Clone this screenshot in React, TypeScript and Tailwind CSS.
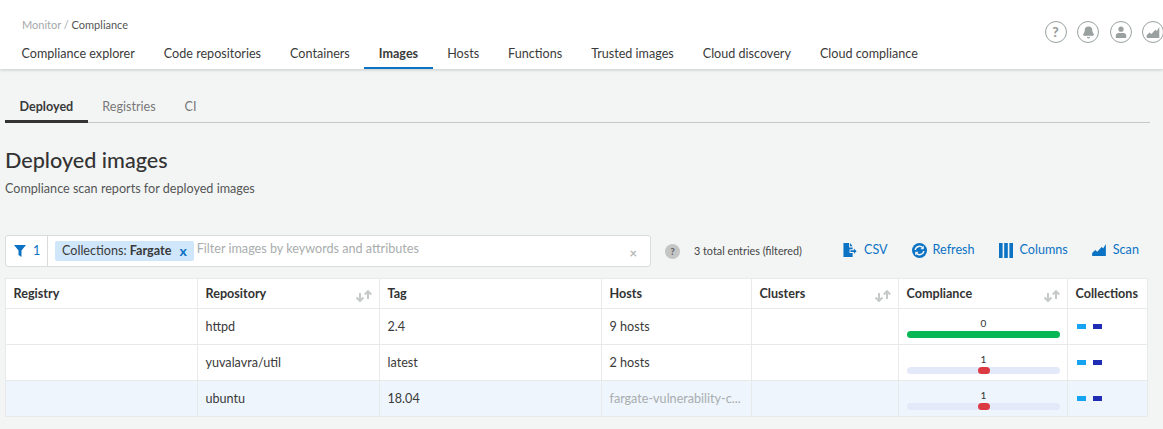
import { Bell } from "lucide-react";

const navTabs = [
  "Compliance explorer",
  "Code repositories",
  "Containers",
  "Images",
  "Hosts",
  "Functions",
  "Trusted images",
  "Cloud discovery",
  "Cloud compliance",
];

const gridCols = "grid grid-cols-[192px_182px_222px_150px_147px_169px_81px]";

const rows = [
  { repository: "httpd", tag: "2.4", hosts: "9 hosts", compliance: 0 },
  { repository: "yuvalavra/util", tag: "latest", hosts: "2 hosts", compliance: 1 },
  {
    repository: "ubuntu",
    tag: "18.04",
    hosts: "fargate-vulnerability-c...",
    muted: true,
    compliance: 1,
    selected: true,
  },
];

function ChartIcon({ className }: { className?: string }) {
  return (
    <svg viewBox="0 0 16 14" className={className} fill="currentColor">
      <path d="M0 14V10.5L3.5 7L6 9L11 3.5L13 5L16 0V14Z" />
    </svg>
  );
}

function SortArrows() {
  return (
    <svg viewBox="0 0 17 12" className="absolute right-[7px] top-[11px] h-[12px] w-[17px]" fill="none" strokeWidth="2">
      <path d="M5 3V11M1.5 7.5L5 11L8.5 7.5" stroke="#c6c9c9" />
      <path d="M13 9V1.5M9.8 4.5L13 1.2L16.2 4.5" stroke="#c6c9c9" />
    </svg>
  );
}

function HeaderIcon({ children }: { children: React.ReactNode }) {
  return (
    <div className="flex h-[22px] w-[22px] items-center justify-center rounded-full border border-[#9aa0a0] text-[#9aa0a0]">
      {children}
    </div>
  );
}

function Action({ icon, label }: { icon: React.ReactNode; label: string }) {
  return (
    <div className="mb-[1px] flex items-center gap-[6px] text-[12.6px] text-[#0b72c4]">
      {icon}
      <span>{label}</span>
    </div>
  );
}

function HeadCell({ label, sort }: { label: string; sort?: boolean }) {
  return (
    <div className="relative border-r border-[#e8eaea] pl-[7.5px] pt-[6px] text-[12.6px] font-bold text-[#333] last:border-r-0">
      {label}
      {sort && <SortArrows />}
    </div>
  );
}

function ComplianceBar({ value }: { value: number }) {
  return (
    <div className="pl-[8px] pr-[7px] pt-[8px]">
      <div className="text-center text-[10px] leading-[12px] text-[#333]">{value}</div>
      <div className={`mt-[2px] flex h-[7px] justify-center rounded-full ${value === 0 ? "bg-[#07b755]" : "bg-[#e4e9fa]"}`}>
        {value > 0 && <div className="h-[7px] w-[12px] rounded-full bg-[#dc3a42]" />}
      </div>
    </div>
  );
}

export default function App() {
  return (
    <div className="h-[429px] w-[1163px] overflow-hidden bg-[#f3f5f5] font-['Lato',sans-serif] text-[#3a3a3a]">
      <header className="flex h-[69px] justify-between bg-white pl-[7px] shadow-[0_1px_3px_rgba(0,0,0,0.18)]">
        <div>
          <div className="pl-[15px] pt-[18px] text-[11px] leading-[14px] text-[#a5a9a9]">
            Monitor / <span className="text-[#555]">Compliance</span>
          </div>
          <nav className="mt-[4px] flex">
            {navTabs.map((tab) => (
              <div
                key={tab}
                className={`h-[33px] border-b-2 px-[14.5px] pt-[8px] text-[12.58px] leading-[20px] ${
                  tab === "Images" ? "border-[#0b72c4] font-bold" : "border-transparent"
                }`}
              >
                {tab}
              </div>
            ))}
          </nav>
        </div>
        <div className="mr-[-1px] flex gap-[10.5px] pt-[21px]">
          <HeaderIcon>
            <span className="text-[14px] font-black leading-none">?</span>
          </HeaderIcon>
          <HeaderIcon>
            <Bell className="h-[13px] w-[13px]" fill="currentColor" />
          </HeaderIcon>
          <HeaderIcon>
            <svg viewBox="0 0 12 12" className="h-[12px] w-[12px]" fill="currentColor">
              <circle cx="6" cy="3.2" r="2.6" />
              <path d="M0.8 12V9.5C0.8 8 2.2 7 3.5 7H8.5C9.8 7 11.2 8 11.2 9.5V12Z" />
            </svg>
          </HeaderIcon>
          <HeaderIcon>
            <ChartIcon className="h-[11px] w-[14px]" />
          </HeaderIcon>
        </div>
      </header>

      <div className="px-[5px] pt-[22px]">
        <div className="flex w-[1145px] border-b border-[#c5c8c8] text-[12.58px] leading-[31px]">
          <div className="mb-[-1px] h-[32px] border-b-[3px] border-[#333] px-[14.5px] font-bold">Deployed</div>
          <div className="px-[14.5px] text-[#777]">Registries</div>
          <div className="px-[14.5px] text-[#777]">CI</div>
        </div>

        <h1 className="mt-[22px] text-[21.6px] font-medium leading-[30px] text-[#333]">Deployed images</h1>
        <p className="mt-[5px] text-[12.6px] leading-[18px] text-[#555]">Compliance scan reports for deployed images</p>

        <div className="mt-[37px] flex h-[32px] items-center">
          <div className="flex h-full w-[646px] items-center rounded-[3px] border border-[#d8dcdc] bg-white">
            <div className="flex h-full w-[42px] items-center gap-[7px] border-r border-[#d8dcdc] pl-[8px] text-[12.6px] text-[#0b72c4]">
              <svg viewBox="0 0 12 12" className="h-[12px] w-[12px]" fill="currentColor">
                <path d="M0 0H12L7.5 5.5V12L4.5 10V5.5Z" />
              </svg>
              <span>1</span>
            </div>
            <div className="ml-[7px] flex h-[20px] items-center gap-[8px] rounded-[2px] bg-[#cfe6fb] px-[7px] text-[12.6px]">
              <span>
                Collections: <span className="font-bold">Fargate</span>
              </span>
              <span className="text-[14px] font-bold leading-none text-[#0b72c4]">x</span>
            </div>
            <span className="mb-[3px] ml-[3px] flex-1 text-[12.6px] text-[#a9adad]">Filter images by keywords and attributes</span>
            <span className="mr-[13px] mt-[5px] text-[13px] font-bold leading-none text-[#b5b8b8]">×</span>
          </div>
          <div className="ml-[14px] flex h-[15px] w-[15px] items-center justify-center rounded-full bg-[#c4c6c6] text-[10px] font-black text-[#666]">
            ?
          </div>
          <span className="ml-[14px] w-[148px] text-[10.8px] text-[#444]">3 total entries (filtered)</span>
          <div className="flex gap-[24px]">
            <Action
              label="CSV"
              icon={
                <svg viewBox="0 0 15 16" className="h-[14px] w-[16px]" fill="currentColor">
                  <path d="M0 0H6.5V5H10.5V7H7V11.5H10.5V16H0ZM7.5 0L10.5 3.7H7.5ZM8 8.3H12V6.2L15 9.3L12 12.4V10.3H8Z" />
                </svg>
              }
            />
            <Action
              label="Refresh"
              icon={
                <svg viewBox="0 0 15 15" className="h-[15px] w-[15px]">
                  <circle cx="7.5" cy="7.5" r="7.5" fill="currentColor" />
                  <path d="M3.2 7A4.4 4.4 0 0 1 11 5M11.8 8A4.4 4.4 0 0 1 4 10" fill="none" stroke="#f3f5f5" strokeWidth="1.5" />
                  <path d="M11.8 2.8V6.2H8.4ZM3.2 12.2V8.8H6.6Z" fill="#f3f5f5" />
                </svg>
              }
            />
            <Action
              label="Columns"
              icon={
                <svg viewBox="0 0 14 15" className="mr-[1px] h-[15px] w-[14px]" fill="currentColor">
                  <path d="M0 0H3.6V15H0ZM5.2 0H8.8V15H5.2ZM10.4 0H14V15H10.4Z" />
                </svg>
              }
            />
            <Action label="Scan" icon={<ChartIcon className="mr-[1px] h-[12px] w-[14px]" />} />
          </div>
        </div>

        <div className="mt-[11px] w-[1143px] border border-[#e8eaea] bg-white">
          <div className={`${gridCols} h-[30px] border-b border-[#e8eaea]`}>
            <HeadCell label="Registry" />
            <HeadCell label="Repository" sort />
            <HeadCell label="Tag" />
            <HeadCell label="Hosts" />
            <HeadCell label="Clusters" sort />
            <HeadCell label="Compliance" sort />
            <HeadCell label="Collections" />
          </div>
          {rows.map((row) => (
            <div
              key={row.repository}
              className={`${gridCols} h-[36px] border-b border-[#e8eaea] text-[12.6px] leading-[35px] last:h-[35px] last:border-b-0 ${
                row.selected ? "bg-[#eef5fd]" : ""
              }`}
            >
              <div className="border-r border-[#e8eaea]" />
              <div className="border-r border-[#e8eaea] pl-[7.5px]">{row.repository}</div>
              <div className="border-r border-[#e8eaea] pl-[7.5px]">{row.tag}</div>
              <div className={`border-r border-[#e8eaea] pl-[7.5px] ${row.muted ? "text-[#a9adad]" : ""}`}>{row.hosts}</div>
              <div className="border-r border-[#e8eaea]" />
              <div className="border-r border-[#e8eaea]">
                <ComplianceBar value={row.compliance} />
              </div>
              <div className="flex items-center gap-[7px] pl-[9px]">
                <div className="h-[5px] w-[9px] bg-[#16a3f2]" />
                <div className="h-[5px] w-[9px] bg-[#1f2db5]" />
              </div>
            </div>
          ))}
        </div>
      </div>
    </div>
  );
}
